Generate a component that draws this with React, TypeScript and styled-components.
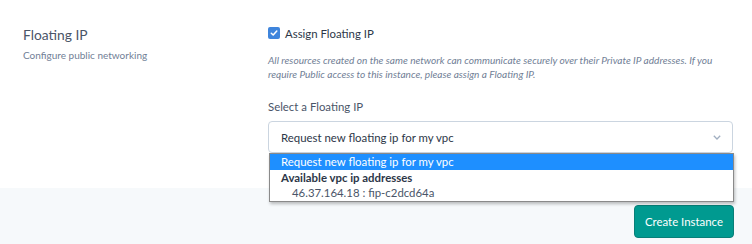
import React from "react";
import styled, { createGlobalStyle } from "styled-components";

const Global = createGlobalStyle`
  html, body { margin: 0; padding: 0; background: #ffffff; }
  body { font-family: Lato, "Open Sans", sans-serif; }
  * { box-sizing: border-box; }
`;

const Page = styled.div`
  width: 752px;
  height: 244px;
  display: flex;
  flex-direction: column;
  overflow: hidden;
`;

const Section = styled.section`
  height: 188px;
  display: grid;
  grid-template-columns: 245px 1fr;
  padding: 26px 19px 0 23px;
  background: #ffffff;
`;

const Intro = styled.div`
  display: flex;
  flex-direction: column;
`;

const Title = styled.h3`
  margin: 0;
  font-size: 13.8px;
  font-weight: 400;
  line-height: 17px;
  color: #4a5568;
`;

const Subtitle = styled.p`
  margin: 6px 0 0;
  font-size: 10px;
  line-height: 13px;
  color: #718096;
`;

const Fields = styled.div`
  display: flex;
  flex-direction: column;
`;

const CheckRow = styled.label`
  display: flex;
  align-items: center;
  gap: 5px;
  height: 14px;
  font-size: 11.4px;
  color: #2d3748;
`;

const Box = styled.span`
  width: 12px;
  height: 12px;
  border-radius: 2px;
  background: #3f85dc;
  display: inline-flex;
  align-items: center;
  justify-content: center;
`;

const Help = styled.p`
  margin: 13px 0 0;
  font-size: 10.1px;
  font-style: italic;
  line-height: 14px;
  color: #718096;
`;

const FieldLabel = styled.div`
  margin-top: 18px;
  font-size: 11.4px;
  line-height: 16px;
  color: #4a5568;
`;

const SelectWrap = styled.div`
  position: relative;
  margin-top: 6px;
`;

const SelectBox = styled.div`
  height: 32px;
  border: 1px solid #cbd5e0;
  border-radius: 4px;
  display: flex;
  align-items: center;
  justify-content: space-between;
  padding: 0 11px 0 12px;
  font-size: 11.4px;
  color: #2d3748;
  background: #fff;
`;

const Menu = styled.ul`
  position: absolute;
  top: 32px;
  left: 1px;
  width: 465px;
  margin: 0;
  padding: 0;
  list-style: none;
  background: #fff;
  border: 1px solid #8a8a8a;
  box-shadow: 1px 2px 3px rgba(0, 0, 0, 0.25);
  z-index: 2;
`;

const Option = styled.li<{ $active?: boolean; $group?: boolean; $indent?: boolean }>`
  height: 15.5px;
  line-height: 15px;
  display: flex;
  align-items: center;
  padding-left: ${(p) => (p.$indent ? 22 : 11)}px;
  font-size: 11.4px;
  font-weight: ${(p) => (p.$group ? 700 : 400)};
  color: ${(p) => (p.$active ? "#ffffff" : p.$group ? "#2d3748" : "#4a5568")};
  background: ${(p) => (p.$active ? "#1e8fff" : "transparent")};
`;

const Footer = styled.footer`
  flex: 1;
  background: #f6f9fb;
  display: flex;
  justify-content: flex-end;
  align-items: flex-start;
  padding: 17px 18px 0 0;
`;

const Button = styled.button`
  width: 100px;
  height: 33px;
  border: 1px solid #087f78;
  border-radius: 4px;
  background: #009a90;
  color: #ffffff;
  font-family: inherit;
  font-size: 11.4px;
  padding: 0;
`;

export default function App() {
  return (
    <Page>
      <Global />
      <Section>
        <Intro>
          <Title>Floating IP</Title>
          <Subtitle>Configure public networking</Subtitle>
        </Intro>
        <Fields>
          <CheckRow>
            <Box>
              <svg width="8" height="8" viewBox="0 0 8 8">
                <path d="M1.3 4.2 L3.2 6 L6.8 2" fill="none" stroke="#fff" strokeWidth="1.5" strokeLinecap="round" strokeLinejoin="round" />
              </svg>
            </Box>
            Assign Floating IP
          </CheckRow>
          <Help>
            All resources created on the same network can communicate securely over their Private IP addresses. If you
            require Public access to this instance, please assign a Floating IP.
          </Help>
          <FieldLabel>Select a Floating IP</FieldLabel>
          <SelectWrap>
            <SelectBox>
              <span>Request new floating ip for my vpc</span>
              <svg width="8" height="5" viewBox="0 0 8 5">
                <path d="M0.8 0.8 L4 4 L7.2 0.8" fill="none" stroke="#a0aec0" strokeWidth="1.3" />
              </svg>
            </SelectBox>
            <Menu>
              <Option $active>Request new floating ip for my vpc</Option>
              <Option $group>Available vpc ip addresses</Option>
              <Option $indent>46.37.164.18 : fip-c2dcd64a</Option>
            </Menu>
          </SelectWrap>
        </Fields>
      </Section>
      <Footer>
        <Button>Create Instance</Button>
      </Footer>
    </Page>
  );
}
